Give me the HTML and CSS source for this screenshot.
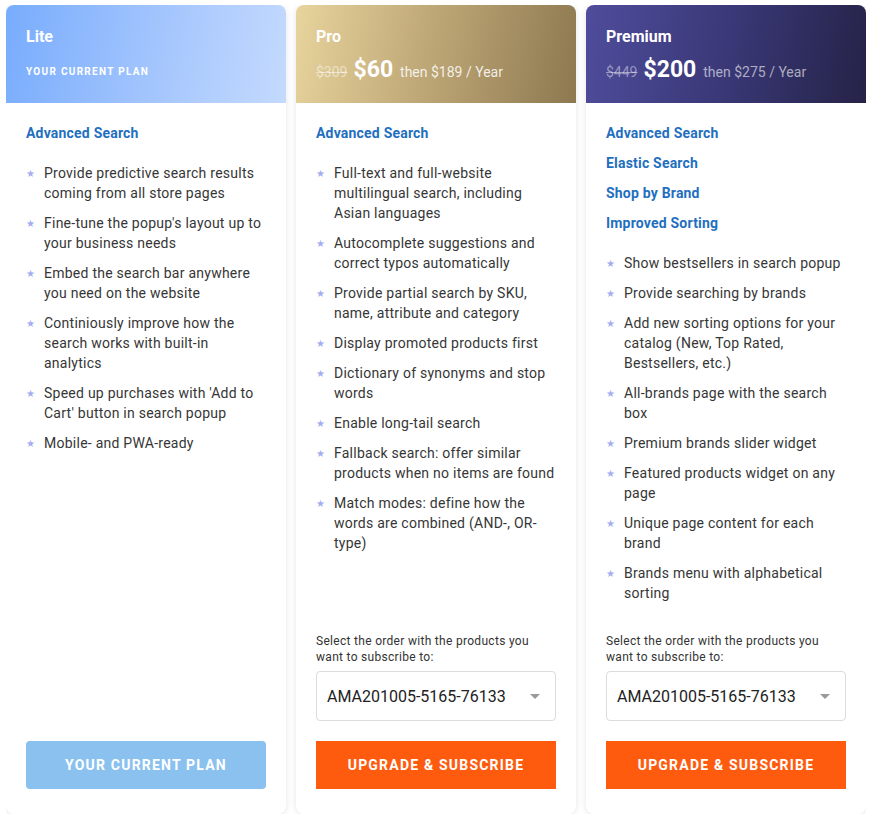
FILE: index.html
```html
<!DOCTYPE html>
<html>
<head>
<meta charset="utf-8">
<link rel="stylesheet" href="styles.css">
</head>
<body>
<div class="cards">
  <div class="card">
    <div class="head head-lite">
      <div class="title">Lite</div>
      <div class="current">YOUR CURRENT PLAN</div>
    </div>
    <div class="body">
      <div class="features">
        <div class="feat">Advanced Search</div>
      </div>
      <ul class="list">
        <li>Provide predictive search results coming from all store pages</li>
        <li>Fine-tune the popup's layout up to your business needs</li>
        <li>Embed the search bar anywhere you need on the website</li>
        <li>Continiously improve how the search works with built-in analytics</li>
        <li>Speed up purchases with 'Add to Cart' button in search popup</li>
        <li>Mobile- and PWA-ready</li>
      </ul>
      <div class="foot">
        <button class="btn btn-current">YOUR CURRENT PLAN</button>
      </div>
    </div>
  </div>

  <div class="card">
    <div class="head head-pro">
      <div class="title">Pro</div>
      <div class="price"><s class="old">$309</s><span class="now">$60</span><span class="then">then $189 / Year</span></div>
    </div>
    <div class="body">
      <div class="features">
        <div class="feat">Advanced Search</div>
      </div>
      <ul class="list">
        <li>Full-text and full-website multilingual search, including Asian languages</li>
        <li>Autocomplete suggestions and correct typos automatically</li>
        <li>Provide partial search by SKU, name, attribute and category</li>
        <li>Display promoted products first</li>
        <li>Dictionary of synonyms and stop words</li>
        <li>Enable long-tail search</li>
        <li>Fallback search: offer similar products when no items are found</li>
        <li>Match modes: define how the words are combined (AND-, OR-type)</li>
      </ul>
      <div class="foot">
        <div class="label">Select the order with the products you want to subscribe to:</div>
        <div class="select"><span>AMA201005-5165-76133</span><i class="arrow"></i></div>
        <button class="btn btn-up">UPGRADE &amp; SUBSCRIBE</button>
      </div>
    </div>
  </div>

  <div class="card">
    <div class="head head-prem">
      <div class="title">Premium</div>
      <div class="price"><s class="old">$449</s><span class="now">$200</span><span class="then">then $275 / Year</span></div>
    </div>
    <div class="body">
      <div class="features">
        <div class="feat">Advanced Search</div>
        <div class="feat">Elastic Search</div>
        <div class="feat">Shop by Brand</div>
        <div class="feat">Improved Sorting</div>
      </div>
      <ul class="list">
        <li>Show bestsellers in search popup</li>
        <li>Provide searching by brands</li>
        <li>Add new sorting options for your catalog (New, Top Rated, Bestsellers, etc.)</li>
        <li>All-brands page with the search box</li>
        <li>Premium brands slider widget</li>
        <li>Featured products widget on any page</li>
        <li>Unique page content for each brand</li>
        <li>Brands menu with alphabetical sorting</li>
      </ul>
      <div class="foot">
        <div class="label">Select the order with the products you want to subscribe to:</div>
        <div class="select"><span>AMA201005-5165-76133</span><i class="arrow"></i></div>
        <button class="btn btn-up">UPGRADE &amp; SUBSCRIBE</button>
      </div>
    </div>
  </div>
</div>
</body>
</html>
```

FILE: styles.css
```css
* { box-sizing: border-box; }
html, body { background: #fff; }
body {
  margin: 5px 7px 0 6px;
  font-family: Roboto, "Liberation Sans", Arial, sans-serif;
  color: #333;
}
.cards {
  display: grid;
  grid-template-columns: 280px 280px 280px;
  gap: 10px;
  height: 809px;
}
.card {
  display: flex;
  flex-direction: column;
  background: #fff;
  border-radius: 8px;
  box-shadow: 0 1px 6px rgba(40, 50, 90, 0.12);
  overflow: hidden;
}
.head {
  height: 98px;
  padding: 22px 20px 0 20px;
  color: #fff;
}
.head-lite { background: linear-gradient(100deg, #78acfd 0%, #a8c8fd 60%, #c4dafe 100%); }
.head-pro { background: linear-gradient(100deg, #e8d49d 0%, #c0a978 45%, #8d7850 100%); }
.head-prem { background: linear-gradient(100deg, #4f4d9c 0%, #3a3877 50%, #252347 100%); }
.title {
  font-size: 16px;
  font-weight: 700;
  line-height: 20px;
}
.current {
  margin-top: 15px;
  font-size: 10px;
  font-weight: 700;
  letter-spacing: 1.3px;
  line-height: 20px;
}
.price {
  margin-top: 13px;
  height: 20px;
  display: flex;
  align-items: baseline;
  line-height: 20px;
  white-space: nowrap;
}
.old {
  font-size: 14px;
  color: rgba(255, 255, 255, 0.5);
  margin-right: 6px;
}
.now {
  font-size: 23px;
  font-weight: 700;
  margin-right: 7px;
}
.then {
  font-size: 14px;
  color: rgba(255, 255, 255, 0.85);
}
.head-prem .then { color: rgba(255, 255, 255, 0.6); }
.head-prem .old { color: rgba(255, 255, 255, 0.45); }
.body {
  flex: 1;
  display: flex;
  flex-direction: column;
  padding: 20px 20px 25px 20px;
}
.features {
  display: flex;
  flex-direction: column;
  gap: 10px;
  margin-bottom: 20px;
}
.feat {
  font-size: 14px;
  font-weight: 700;
  line-height: 20px;
  letter-spacing: 0.2px;
  color: #1f6fc0;
}
.list {
  list-style: none;
  margin: 0;
  padding: 0;
  display: flex;
  flex-direction: column;
  gap: 10px;
}
.list li {
  position: relative;
  padding-left: 18px;
  font-size: 14px;
  line-height: 20px;
  letter-spacing: 0.25px;
  color: #363636;
}
.list li::before {
  content: "★";
  position: absolute;
  left: 0;
  top: 1px;
  font-size: 10px;
  color: #a4acf0;
  font-family: "DejaVu Sans", sans-serif;
}
.foot {
  margin-top: auto;
  display: flex;
  flex-direction: column;
}
.label {
  font-size: 12px;
  line-height: 16px;
  letter-spacing: 0.3px;
  color: #333;
}
.select {
  margin-top: 6px;
  height: 50px;
  border: 1px solid #dcdcdc;
  border-radius: 4px;
  display: flex;
  align-items: center;
  justify-content: space-between;
  padding: 0 15px 0 10px;
  font-size: 16px;
  color: #222;
}
.arrow {
  width: 0;
  height: 0;
  border-left: 5px solid transparent;
  border-right: 5px solid transparent;
  border-top: 5px solid #9a9a9a;
}
.btn {
  margin-top: 20px;
  height: 48px;
  width: 100%;
  border: 0;
  font-family: Roboto, "Liberation Sans", Arial, sans-serif;
  font-size: 14px;
  font-weight: 700;
  letter-spacing: 1.2px;
  color: #fff;
}
.btn-current {
  background: #8ac1ee;
  border-radius: 4px;
}
.btn-up {
  background: #ff5b0f;
  border-radius: 0;
}
```
